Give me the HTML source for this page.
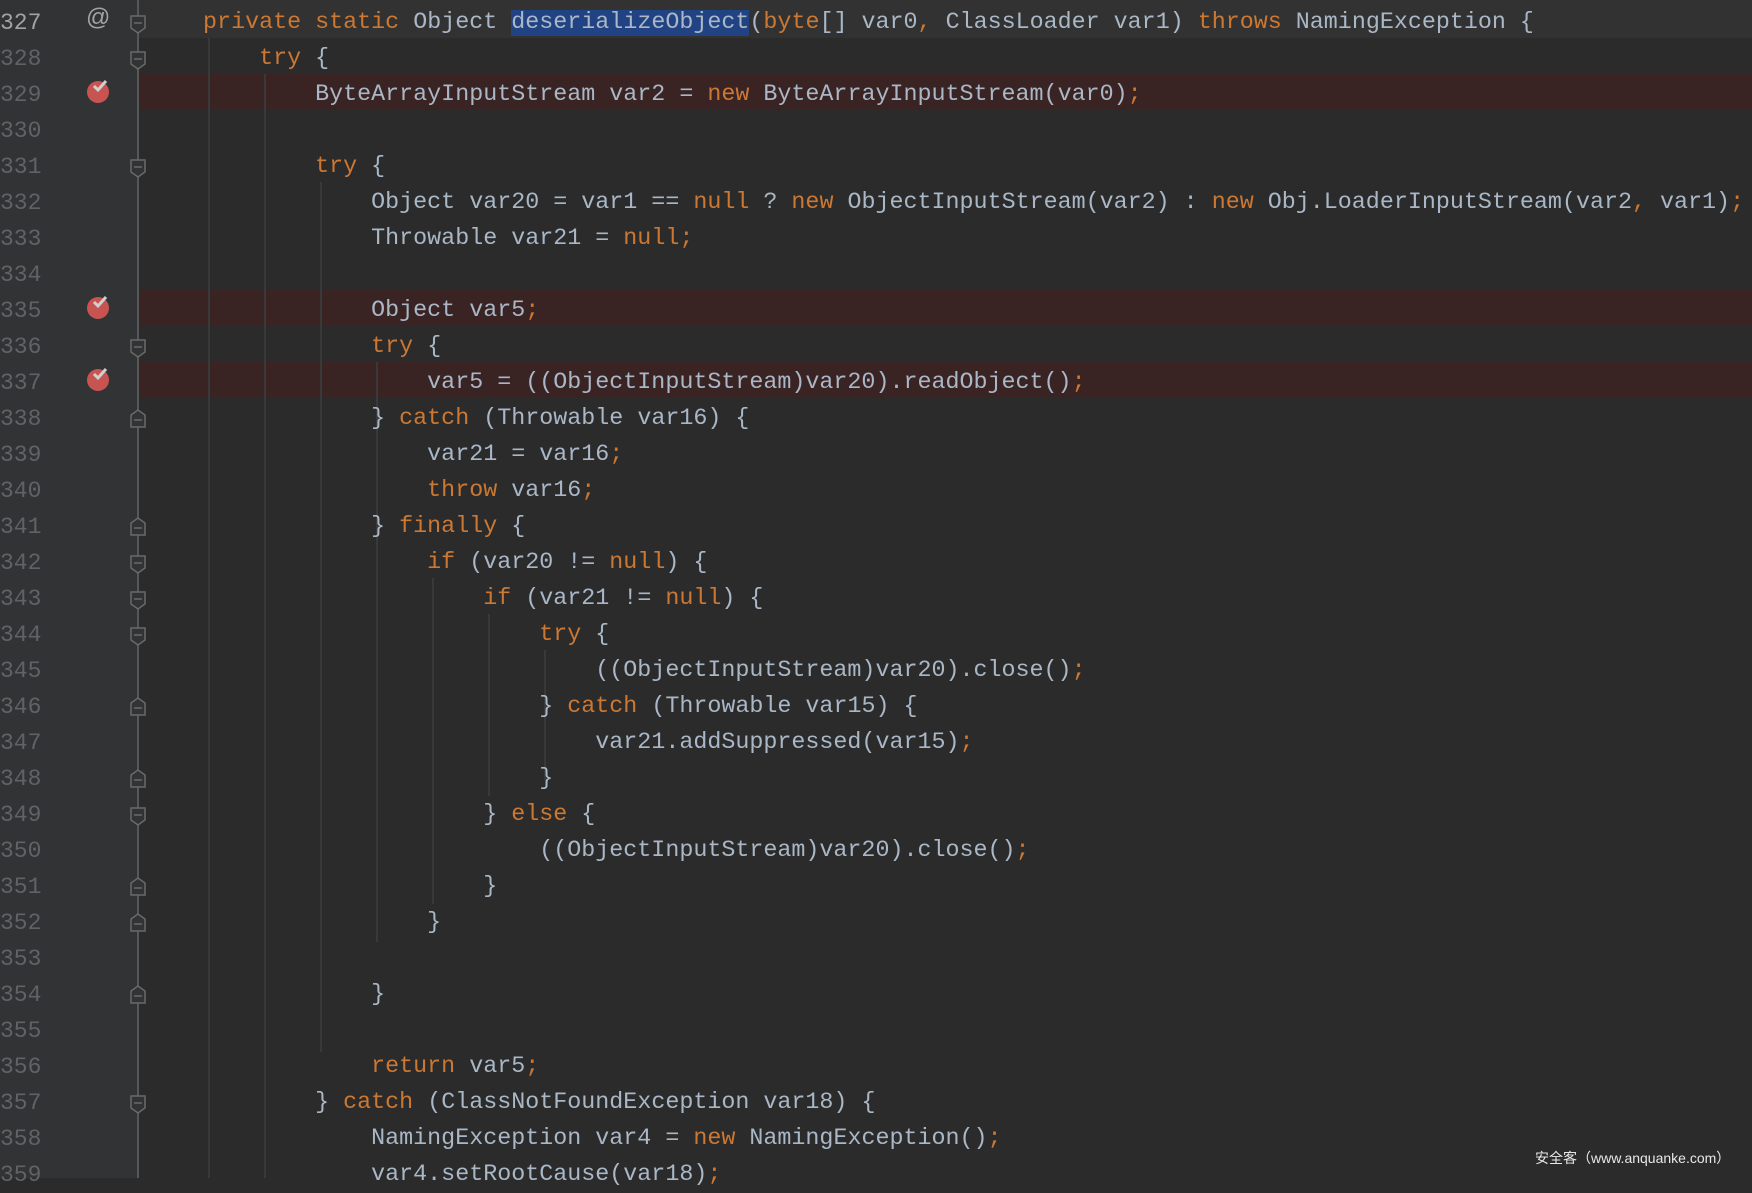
<!DOCTYPE html>
<html><head><meta charset="utf-8"><style>
body{margin:0;width:1752px;height:1178px;overflow:hidden;background:#2b2b2b;position:relative;font-family:"Liberation Mono",monospace;}
.gut{position:absolute;left:0;top:0;width:138px;height:1178px;background:#313335;}
.sep{position:absolute;left:137px;top:0;width:2px;height:1178px;background:#555759;}
.row{position:absolute;left:0;width:1752px;height:36px;}
.ln{position:absolute;left:0;width:44px;font-size:23px;line-height:36px;color:#606366;text-align:left;}
.code{position:absolute;left:147px;font-size:23.35px;line-height:36px;color:#a9b7c6;white-space:pre;}
.k{color:#cc7832}
.sel{background:#214283}
.g{position:absolute;width:2px;background:#393939;}
.bp{position:absolute;left:87px;width:22px;height:22px;border-radius:50%;background:#c75450;}
</style></head><body>
<div class="row" style="top:0;height:38px;background:#323232"></div>
<div class="row" style="top:74px;background:#3a2323"></div>
<div class="row" style="top:290px;background:#3a2323"></div>
<div class="row" style="top:362px;background:#3a2323"></div>
<div class="gut"></div>
<div class="sep"></div>
<div class="g" style="left:208px;top:38px;height:1140px"></div>
<div class="g" style="left:264px;top:74px;height:1104px"></div>
<div class="g" style="left:320px;top:182px;height:870px"></div>
<div class="g" style="left:376px;top:362px;height:580px"></div>
<div class="g" style="left:432px;top:578px;height:326px"></div>
<div class="g" style="left:488px;top:614px;height:182px"></div>
<div class="g" style="left:544px;top:650px;height:130px"></div>

<div class="code" style="top:5px">    <span class="k">private static </span>Object <span class="sel">deserializeObject</span>(<span class="k">byte</span>[] var0<span class="k">, </span>ClassLoader var1) <span class="k">throws </span>NamingException {
        <span class="k">try </span>{
            ByteArrayInputStream var2 = <span class="k">new </span>ByteArrayInputStream(var0)<span class="k">;</span>

            <span class="k">try </span>{
                Object var20 = var1 == <span class="k">null </span>? <span class="k">new </span>ObjectInputStream(var2) : <span class="k">new </span>Obj.LoaderInputStream(var2<span class="k">, </span>var1)<span class="k">;</span>
                Throwable var21 = <span class="k">null;</span>

                Object var5<span class="k">;</span>
                <span class="k">try </span>{
                    var5 = ((ObjectInputStream)var20).readObject()<span class="k">;</span>
                } <span class="k">catch </span>(Throwable var16) {
                    var21 = var16<span class="k">;</span>
                    <span class="k">throw </span>var16<span class="k">;</span>
                } <span class="k">finally </span>{
                    <span class="k">if </span>(var20 != <span class="k">null</span>) {
                        <span class="k">if </span>(var21 != <span class="k">null</span>) {
                            <span class="k">try </span>{
                                ((ObjectInputStream)var20).close()<span class="k">;</span>
                            } <span class="k">catch </span>(Throwable var15) {
                                var21.addSuppressed(var15)<span class="k">;</span>
                            }
                        } <span class="k">else </span>{
                            ((ObjectInputStream)var20).close()<span class="k">;</span>
                        }
                    }

                }

                <span class="k">return </span>var5<span class="k">;</span>
            } <span class="k">catch </span>(ClassNotFoundException var18) {
                NamingException var4 = <span class="k">new </span>NamingException()<span class="k">;</span>
                var4.setRootCause(var18)<span class="k">;</span></div>

<div style="position:absolute;left:0;top:5px">
<div class="ln" style="top:0px;color:#a4a3a3">327</div><div class="ln" style="top:36px">328</div><div class="ln" style="top:72px">329</div><div class="ln" style="top:108px">330</div><div class="ln" style="top:144px">331</div><div class="ln" style="top:180px">332</div><div class="ln" style="top:216px">333</div><div class="ln" style="top:252px">334</div><div class="ln" style="top:288px">335</div><div class="ln" style="top:324px">336</div><div class="ln" style="top:360px">337</div><div class="ln" style="top:396px">338</div><div class="ln" style="top:432px">339</div><div class="ln" style="top:468px">340</div><div class="ln" style="top:504px">341</div><div class="ln" style="top:540px">342</div><div class="ln" style="top:576px">343</div><div class="ln" style="top:612px">344</div><div class="ln" style="top:648px">345</div><div class="ln" style="top:684px">346</div><div class="ln" style="top:720px">347</div><div class="ln" style="top:756px">348</div><div class="ln" style="top:792px">349</div><div class="ln" style="top:828px">350</div><div class="ln" style="top:864px">351</div><div class="ln" style="top:900px">352</div><div class="ln" style="top:936px">353</div><div class="ln" style="top:972px">354</div><div class="ln" style="top:1008px">355</div><div class="ln" style="top:1044px">356</div><div class="ln" style="top:1080px">357</div><div class="ln" style="top:1116px">358</div><div class="ln" style="top:1152px">359</div>
</div>

<div style="position:absolute;left:86px;top:4px;font-family:'Liberation Sans',sans-serif;font-size:24px;color:#a4a3a3">@</div>
<div class="bp" style="top:81px"></div><div class="bp" style="top:297px"></div><div class="bp" style="top:369px"></div>
<svg style="position:absolute;left:0;top:0" width="1752" height="1178">
<g fill="none" stroke="#d0d0d0" stroke-width="3">
<path d="M94 86l4 4 8-9"/><path d="M94 302l4 4 8-9"/><path d="M94 374l4 4 8-9"/>
</g>
<g fill="#313335" stroke="#6a6a6a" stroke-width="1.5">
<path d="M131 16h14v12l-7 5-7-5z"/>
<path d="M131 52h14v12l-7 5-7-5z"/>
<path d="M131 160h14v12l-7 5-7-5z"/>
<path d="M131 340h14v12l-7 5-7-5z"/>
<path d="M131 556h14v12l-7 5-7-5z"/>
<path d="M131 592h14v12l-7 5-7-5z"/>
<path d="M131 628h14v12l-7 5-7-5z"/>
<path d="M131 808h14v12l-7 5-7-5z"/>
<path d="M131 1096h14v12l-7 5-7-5z"/>
<path d="M131 427h14v-12l-7-5-7 5z"/>
<path d="M131 535h14v-12l-7-5-7 5z"/>
<path d="M131 715h14v-12l-7-5-7 5z"/>
<path d="M131 787h14v-12l-7-5-7 5z"/>
<path d="M131 895h14v-12l-7-5-7 5z"/>
<path d="M131 931h14v-12l-7-5-7 5z"/>
<path d="M131 1003h14v-12l-7-5-7 5z"/>
</g>
<g stroke="#6a6a6a" stroke-width="1.5">
<path d="M134 23h8M134 59h8M134 167h8M134 347h8M134 563h8M134 599h8M134 635h8M134 815h8M134 1103h8M134 420h8M134 528h8M134 708h8M134 780h8M134 888h8M134 924h8M134 996h8"/>
</g>
</svg>
<div style="position:absolute;left:1535px;top:1148px;font-family:'Liberation Sans','Noto Sans CJK SC',sans-serif;font-size:14px;color:#e8e8e8">安全客（www.anquanke.com）</div>
</body></html>
